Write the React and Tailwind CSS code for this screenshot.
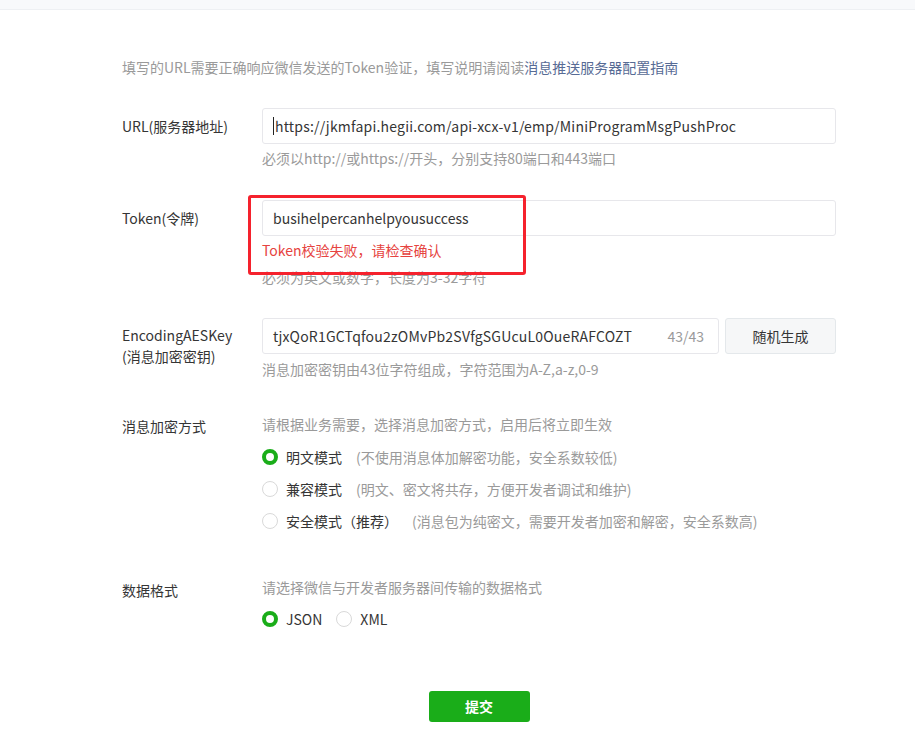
const font = { fontFamily: '"Noto Sans CJK SC", "Noto Sans", sans-serif' }

function Radio({ checked }) {
  return checked ? (
    <span className="inline-block w-4 h-4 rounded-full border-[4px] border-[#1aad19] bg-white shrink-0" />
  ) : (
    <span className="inline-block w-4 h-4 rounded-full border border-[#d9d9d9] bg-white shrink-0" />
  )
}

function Row({ label, children, labelClass = 'leading-9' }) {
  return (
    <div className="flex">
      <div className={'w-[140px] shrink-0 text-[14px] text-[#353535] ' + labelClass}>{label}</div>
      <div className="flex-1 min-w-0">{children}</div>
    </div>
  )
}

const inputBox = 'h-9 border border-[#e7e7eb] rounded-[3px] bg-white flex items-center px-[10px] text-[14px] text-[#353535]'

export default function App() {
  return (
    <div className="min-h-[751px] bg-white" style={font}>
      <div className="h-[10px] bg-[#f8f9fb] border-b border-[#eef0f3]" />

      <div className="ml-[122px] w-[714px]">
        {/* intro */}
        <p className="mt-[47px] text-[14px] leading-5 text-[#9a9a9a]">
          填写的URL需要正确响应微信发送的Token验证，填写说明请阅读
          <span className="text-[#576b95]">消息推送服务器配置指南</span>
        </p>

        {/* URL */}
        <div className="mt-[31px]">
          <Row label="URL(服务器地址)">
            <div className={inputBox}>
              <span className="inline-block w-px h-[18px] bg-[#222] mr-px" />
              <span className="tracking-[0.2px]">https://jkmfapi.hegii.com/api-xcx-v1/emp/MiniProgramMsgPushProc</span>
            </div>
            <p className="mt-1 text-[14px] leading-5 text-[#9a9a9a]">必须以http://或https://开头，分别支持80端口和443端口</p>
          </Row>
        </div>

        {/* Token */}
        <div className="mt-[32px]">
          <Row label="Token(令牌)">
            <div className="relative">
              <div className={inputBox}>busihelpercanhelpyousuccess</div>
              <p className="mt-1 text-[14px] leading-5 text-[#e64340]">Token校验失败，请检查确认</p>
              <p className="mt-[7px] text-[14px] leading-5 text-[#9a9a9a]">必须为英文或数字，长度为3-32字符</p>
              <div className="absolute left-[-14px] top-[-5px] w-[278px] h-[80px] border-[3px] border-[#f5222d] rounded-[3px] pointer-events-none" />
            </div>
          </Row>
        </div>

        {/* AES */}
        <div className="mt-[31px]">
          <Row
            labelClass="leading-[21px] pt-[7px]"
            label={
              <>
                <div>EncodingAESKey</div>
                <div>(消息加密密钥)</div>
              </>
            }
          >
            <div className="flex gap-[6px]">
              <div className={inputBox + ' flex-1 justify-between pr-[14px]'}>
                <span className="tracking-[0.2px]">tjxQoR1GCTqfou2zOMvPb2SVfgSGUcuL0OueRAFCOZT</span>
                <span className="text-[#9a9a9a]">43/43</span>
              </div>
              <button className="w-[111px] h-9 border border-[#e4e8eb] rounded-[3px] bg-[#f6f7f8] text-[14px] text-[#353535]">
                随机生成
              </button>
            </div>
            <p className="mt-[5px] text-[14px] leading-5 text-[#9a9a9a]">消息加密密钥由43位字符组成，字符范围为A-Z,a-z,0-9</p>
          </Row>
        </div>

        {/* 消息加密方式 */}
        <div className="mt-[35px]">
          <Row label="消息加密方式" labelClass="leading-5 pt-[2px]">
            <p className="text-[14px] leading-5 text-[#9a9a9a]">请根据业务需要，选择消息加密方式，启用后将立即生效</p>
            <div className="mt-[13px] flex flex-col gap-[12px]">
              {[
                ['明文模式', '(不使用消息体加解密功能，安全系数较低)', true],
                ['兼容模式', '(明文、密文将共存，方便开发者调试和维护)', false],
                ['安全模式（推荐）', '(消息包为纯密文，需要开发者加密和解密，安全系数高)', false],
              ].map(([name, desc, on]) => (
                <div key={name} className="flex items-center h-5 text-[14px]">
                  <Radio checked={on} />
                  <span className="ml-2 text-[#353535]">{name}</span>
                  <span className="ml-[14px] text-[#9a9a9a]">{desc}</span>
                </div>
              ))}
            </div>
          </Row>
        </div>

        {/* 数据格式 */}
        <div className="mt-[46px]">
          <Row label="数据格式" labelClass="leading-5 pt-[3px]">
            <p className="text-[14px] leading-5 text-[#9a9a9a]">请选择微信与开发者服务器间传输的数据格式</p>
            <div className="mt-[12px] flex items-center h-5 text-[14px] text-[#353535]">
              <Radio checked />
              <span className="ml-2">JSON</span>
              <span className="ml-[14px]" />
              <Radio />
              <span className="ml-2">XML</span>
            </div>
          </Row>
        </div>

        {/* submit */}
        <div className="mt-[62px] flex justify-center">
          <button className="w-[101px] h-[31px] rounded-[3px] bg-[#1aad19] text-white text-[14px] font-bold">提交</button>
        </div>
      </div>
    </div>
  )
}
